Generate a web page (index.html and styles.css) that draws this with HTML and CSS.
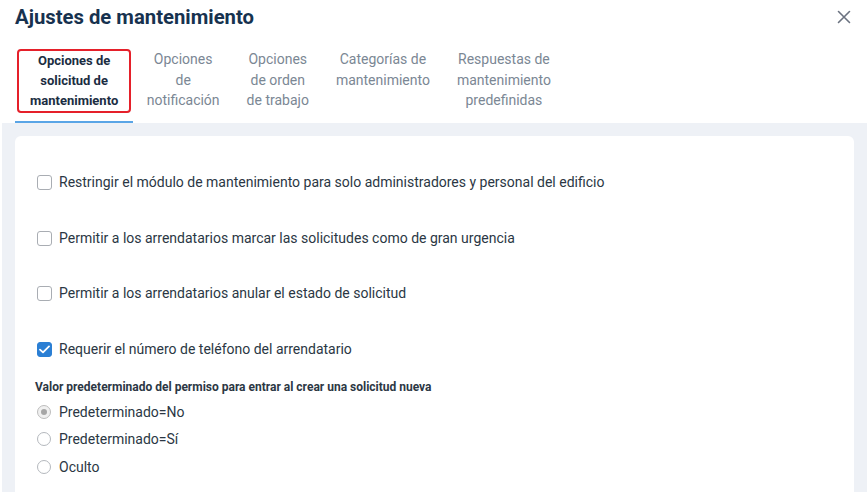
FILE: index.html
```html
<!DOCTYPE html>
<html lang="es">
<head>
  <meta charset="UTF-8">
  <meta name="viewport" content="width=device-width, initial-scale=1.0">
  <title>Ajustes de mantenimiento</title>
  <link rel="stylesheet" href="styles.css">
</head>
<body>
  <div class="modal">
    <div class="modal-header">
      <h1 class="modal-title">Ajustes de mantenimiento</h1>
      <button class="close-btn" aria-label="Cerrar">
        <svg width="14" height="14" viewBox="0 0 14 14">
          <path d="M1.5 1.5 L12.5 12.5 M12.5 1.5 L1.5 12.5" stroke="#6b7280" stroke-width="1.6" stroke-linecap="round"/>
        </svg>
      </button>
    </div>

    <div class="tabs">
      <div class="tab active"><span class="tab-focus">Opciones de<br>solicitud de<br>mantenimiento</span></div>
      <div class="tab">Opciones<br>de<br>notificación</div>
      <div class="tab">Opciones<br>de orden<br>de trabajo</div>
      <div class="tab">Categorías de<br>mantenimiento</div>
      <div class="tab">Respuestas de<br>mantenimiento<br>predefinidas</div>
    </div>

    <div class="modal-body">
      <div class="card">
        <label class="check-row">
          <span class="checkbox"></span>
          Restringir el módulo de mantenimiento para solo administradores y personal del edificio
        </label>
        <label class="check-row">
          <span class="checkbox"></span>
          Permitir a los arrendatarios marcar las solicitudes como de gran urgencia
        </label>
        <label class="check-row">
          <span class="checkbox"></span>
          Permitir a los arrendatarios anular el estado de solicitud
        </label>
        <label class="check-row">
          <span class="checkbox checked">
            <svg width="11" height="9" viewBox="0 0 11 9">
              <path d="M1 4.6 L4 7.4 L10 1.4" fill="none" stroke="#fff" stroke-width="1.8" stroke-linecap="round" stroke-linejoin="round"/>
            </svg>
          </span>
          Requerir el número de teléfono del arrendatario
        </label>

        <div class="group-label">Valor predeterminado del permiso para entrar al crear una solicitud nueva</div>
        <label class="radio-row">
          <span class="radio selected"></span>
          Predeterminado=No
        </label>
        <label class="radio-row">
          <span class="radio"></span>
          Predeterminado=Sí
        </label>
        <label class="radio-row">
          <span class="radio"></span>
          Oculto
        </label>
      </div>
    </div>
  </div>
</body>
</html>
```

FILE: styles.css
```css
body {
  margin: 0;
  background: #ffffff;
  font-family: Roboto, "Liberation Sans", Arial, sans-serif;
  overflow: hidden;
}

.modal {
  height: 492px;
  display: flex;
  flex-direction: column;
}

/* Header */
.modal-header {
  display: flex;
  justify-content: space-between;
  align-items: center;
  padding: 5px 16px 0 15px;
}

.modal-title {
  margin: 0;
  font-size: 20.3px;
  line-height: 24px;
  font-weight: 700;
  color: #17324f;
}

.close-btn {
  background: transparent;
  border: none;
  padding: 0;
  width: 14px;
  height: 14px;
  cursor: pointer;
}

/* Tabs */
.tabs {
  display: flex;
  align-items: flex-start;
  margin: 20px 0 0 15px;
}

.tab {
  padding: 0 13.5px;
  font-size: 14px;
  line-height: 20.5px;
  color: #7b8794;
  text-align: center;
  white-space: nowrap;
}

.tab.active {
  padding: 0 2px 8px;
  border-bottom: 2px solid #5aa5e6;
  font-size: 13px;
  font-weight: 700;
  color: #1b2d42;
}

.tab-focus {
  display: block;
  padding: 0 11px;
  line-height: 20px;
  border: 2px solid #e5202a;
  border-radius: 4px;
}

/* Body */
.modal-body {
  flex: 1;
  margin-left: 2px;
  background: #eef1f6;
  padding: 13px 13px 0 13px;
}

.card {
  background: #ffffff;
  border-radius: 6px 6px 0 0;
  padding: 19px 22px 20px;
  height: 100%;
  box-sizing: border-box;
  color: #2b3744;
}

.check-row {
  display: flex;
  align-items: center;
  gap: 7px;
  padding: 18px 0;
  font-size: 14px;
  line-height: 19.5px;
}

.checkbox {
  width: 13px;
  height: 13px;
  border: 1px solid #a9adb3;
  border-radius: 3px;
  display: flex;
  align-items: center;
  justify-content: center;
  flex-shrink: 0;
}

.checkbox.checked {
  background: #2b7fd4;
  border-color: #2b7fd4;
}

.group-label {
  margin: 2px 0 3px -2px;
  font-size: 12px;
  line-height: 16px;
  font-weight: 700;
  color: #2c3744;
}

.radio-row {
  display: flex;
  align-items: center;
  gap: 8px;
  height: 27.5px;
  font-size: 14px;
}

.radio {
  width: 12px;
  height: 12px;
  border: 1px solid #b4b8bd;
  border-radius: 50%;
  flex-shrink: 0;
  position: relative;
}

.radio.selected {
  background: #f0f0f0;
  border-color: #bdbdbd;
}

.radio.selected::after {
  content: "";
  position: absolute;
  left: 3px;
  top: 3px;
  width: 6px;
  height: 6px;
  border-radius: 50%;
  background: #a6a6a6;
}
```
